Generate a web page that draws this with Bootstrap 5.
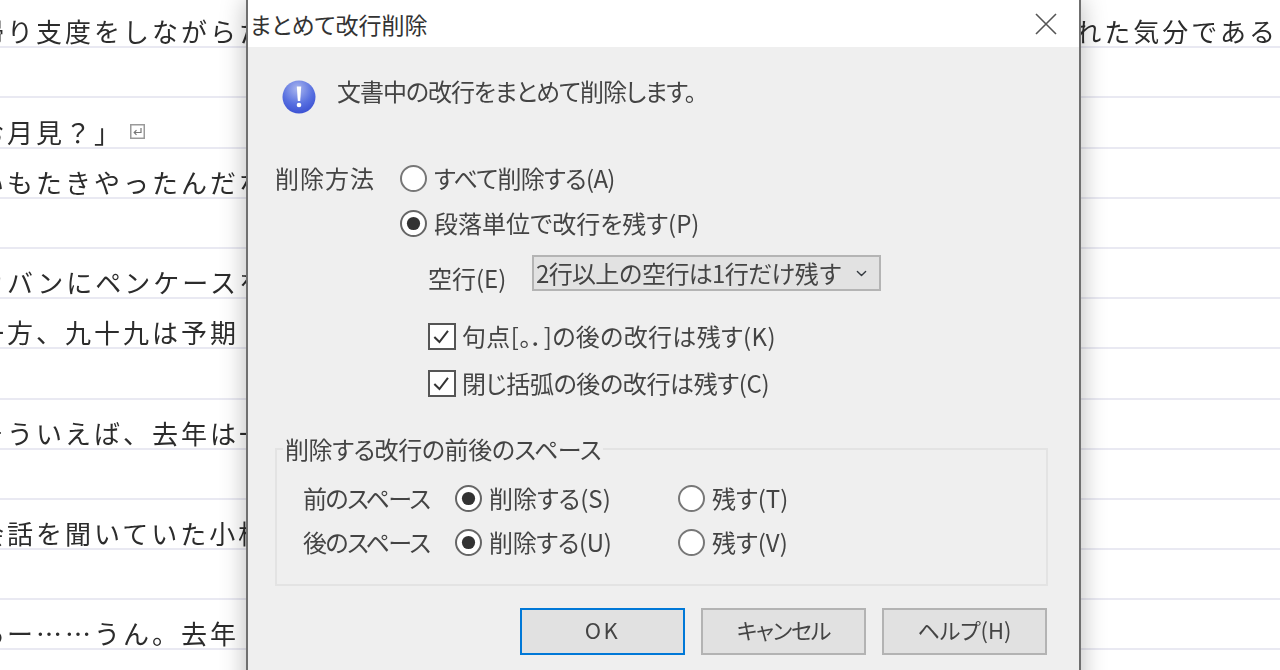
<!DOCTYPE html>
<html lang="ja">
<head>
<meta charset="utf-8">
<title>まとめて改行削除</title>
<link href="https://cdn.jsdelivr.net/npm/bootstrap@5.3.0/dist/css/bootstrap.min.css" rel="stylesheet">
<style>
html,body{height:670px;overflow:hidden;background:#fff}
body{font-family:"Noto Sans CJK JP",sans-serif;color:#3c3c3c}
.sheet{position:relative;width:1280px;height:670px;overflow:hidden;filter:blur(.35px)}
.doc{margin-top:-2px}
.doc-row{height:50.2px;border-bottom:2px solid #e9e9f2;font-family:"Noto Sans CJK JP",serif;font-size:26px;letter-spacing:3px;line-height:30px;color:#2c2c2c;white-space:nowrap;overflow:hidden;align-items:flex-end;padding-left:0}
.doc-left{margin-left:-22px}
.doc-right{margin-left:auto;margin-right:2px}
.ret-mark{width:15px;height:15px;margin-left:7px;margin-bottom:8px;flex:none}
.dlg{position:absolute;left:246px;top:0;width:835px;height:700px;background:#efefef;border-left:2px solid #6f6f6f;border-right:2px solid #6f6f6f;box-shadow:0 0 24px rgba(0,0,0,.28);font-size:24px;line-height:28px;font-feature-settings:"palt";color:#444}
.dlg-title{height:47px;background:#fff;padding-left:2px;align-items:center;justify-content:space-between;color:#333;font-size:23px}
.dlg-x{width:24px;height:24px;margin-right:21px}
.dlg-body{padding:33px 31px 0 27px}
.msg{margin-left:7px;gap:21px}
.msg-icon{width:34px;height:34px;flex:none}
.msg-text{margin-top:-3px;letter-spacing:-1.05px}
.way{margin-top:50px}
.way-label{width:125px;flex:none;letter-spacing:1px}
.opt-next{margin-top:17px;margin-left:125px}
.sp-a{letter-spacing:-.7px}
.sp-k{letter-spacing:.35px}
.sp-c{letter-spacing:-.35px}
.sp-u{letter-spacing:-.3px}
.dlg .form-check-input{margin:0;flex:none;float:none;width:27px;height:27px;background-color:#fff;border:2px solid #777;box-shadow:none}
.dlg .form-check-input[type=radio]:checked{background-color:#fff;border-color:#666;background-image:url("data:image/svg+xml,%3csvg xmlns='http://www.w3.org/2000/svg' viewBox='-4 -4 8 8'%3e%3ccircle r='2.3' fill='%23333'/%3e%3c/svg%3e")}
.dlg .form-check-input[type=checkbox]{border-radius:0;width:28px;height:27px;border-color:#555}
.dlg .form-check-input[type=checkbox]:checked{background-color:#fff;background-size:100% 100%;background-image:url("data:image/svg+xml,%3csvg xmlns='http://www.w3.org/2000/svg' viewBox='0 0 28 27'%3e%3cpath d='M5 14l6 6L21 7' fill='none' stroke='%23333' stroke-width='2.4'/%3e%3c/svg%3e")}
.opt{gap:7px}
.blank{margin-top:18px;margin-left:153px}
.blank-label{width:104px;flex:none;padding-top:9px}
.dlg .blank-select{width:349px;height:36px;padding:0 0 0 2px;border:2px solid #b4b4b4;border-radius:0;background-color:#e2e2e2;font-size:24px;letter-spacing:-.65px;line-height:30px;color:#444;box-shadow:none;background-position:right 10px center;background-size:15px 11px}
.chk{margin-left:153px;gap:6px}
.chk-a{margin-top:30px}
.chk-b{margin-top:19px}
.spaces{margin-top:45px;margin-bottom:0;border:2px solid #e3e3e3;padding:20px 0 0 26px;min-width:0;box-sizing:content-box;height:120px}
.spaces legend{float:none;width:auto;font-size:24px;letter-spacing:-.4px;line-height:14px;margin:0 0 0 -20px;padding:0 2px;height:14px;overflow:visible}
.sp-row{height:44px;align-items:center}
.sp-label{width:152px;flex:none;letter-spacing:-1.5px}
.sp-del{width:223px;flex:none}
.dlg-actions{margin-top:22px;gap:16px;justify-content:flex-end;margin-right:1px}
.dlg .act{width:165px;height:47px;padding:0 0 5px;background:#e1e1e1;border:2px solid #b3b3b3;border-radius:0;color:#444;font-size:22px;line-height:28px;font-feature-settings:"palt"}
.dlg .act-main{border-color:#0078d7}
.dlg .ok-txt{letter-spacing:2.5px}
.dlg .cancel-txt{letter-spacing:-1.2px}
</style>
</head>
<body>
<div class="sheet">
  <div class="doc">
    <div class="doc-row d-flex"><span class="doc-left">帰り支度をしながらた</span><span class="doc-right">れた気分である</span></div>
    <div class="doc-row d-flex"></div>
    <div class="doc-row d-flex"><span class="doc-left">お月見？」</span>
      <svg class="ret-mark" viewBox="0 0 15 15"><rect x=".75" y=".75" width="13.5" height="13.5" fill="#fff" stroke="#9a9a9a" stroke-width="1.5"/><path d="M11 4v4.5H4.5M6.5 6.2L4.2 8.5l2.3 2.3" fill="none" stroke="#777" stroke-width="1.2"/></svg>
    </div>
    <div class="doc-row d-flex"><span class="doc-left">いもたきやったんだな</span></div>
    <div class="doc-row d-flex"></div>
    <div class="doc-row d-flex"><span class="doc-left">カバンにペンケースを</span></div>
    <div class="doc-row d-flex"><span class="doc-left">一方、九十九は予期</span></div>
    <div class="doc-row d-flex"></div>
    <div class="doc-row d-flex"><span class="doc-left">そういえば、去年は一</span></div>
    <div class="doc-row d-flex"></div>
    <div class="doc-row d-flex"><span class="doc-left">会話を聞いていた小松</span></div>
    <div class="doc-row d-flex"></div>
    <div class="doc-row d-flex"><span class="doc-left">あー……うん。去年</span></div>
    <div class="doc-row d-flex"></div>
  </div>

  <div class="dlg" role="dialog">
    <div class="dlg-title d-flex">
      <span>まとめて改行削除</span>
      <svg class="dlg-x" viewBox="0 0 24 24"><path d="M2 2l20 20M22 2L2 22" stroke="#555" stroke-width="1.6" fill="none"/></svg>
    </div>
    <div class="dlg-body">
      <div class="msg d-flex">
        <svg class="msg-icon" viewBox="0 0 34 34">
          <defs><radialGradient id="ball" cx=".45" cy=".25" r=".85"><stop offset="0" stop-color="#a9b6ee"/><stop offset=".55" stop-color="#5870e0"/><stop offset="1" stop-color="#3348cf"/></radialGradient></defs>
          <circle cx="17" cy="17" r="16.5" fill="url(#ball)"/>
          <path d="M14.8 6.5h4.4l-1 14.5h-2.4z" fill="#fff"/><circle cx="17" cy="25" r="2.3" fill="#fff"/>
        </svg>
        <div class="msg-text">文書中の改行をまとめて削除します。</div>
      </div>

      <div class="way d-flex align-items-center">
        <span class="way-label">削除方法</span>
        <label class="opt sp-a d-flex align-items-center"><input class="form-check-input" type="radio" name="way">すべて削除する(A)</label>
      </div>
      <div class="opt-next d-flex align-items-center">
        <label class="opt d-flex align-items-center"><input class="form-check-input" type="radio" name="way" checked>段落単位で改行を残す(P)</label>
      </div>

      <div class="blank d-flex">
        <span class="blank-label">空行(E)</span>
        <select class="form-select blank-select"><option>2行以上の空行は1行だけ残す</option></select>
      </div>

      <label class="chk chk-a sp-k d-flex align-items-center"><input class="form-check-input" type="checkbox" checked>句点[。．]の後の改行は残す(K)</label>
      <label class="chk chk-b sp-c d-flex align-items-center"><input class="form-check-input" type="checkbox" checked>閉じ括弧の後の改行は残す(C)</label>

      <fieldset class="spaces">
        <legend>削除する改行の前後のスペース</legend>
        <div class="sp-row d-flex">
          <span class="sp-label">前のスペース</span>
          <label class="sp-del opt d-flex align-items-center"><input class="form-check-input" type="radio" name="pre" checked>削除する(S)</label>
          <label class="opt d-flex align-items-center"><input class="form-check-input" type="radio" name="pre">残す(T)</label>
        </div>
        <div class="sp-row d-flex">
          <span class="sp-label">後のスペース</span>
          <label class="sp-del opt sp-u d-flex align-items-center"><input class="form-check-input" type="radio" name="post" checked>削除する(U)</label>
          <label class="opt d-flex align-items-center"><input class="form-check-input" type="radio" name="post">残す(V)</label>
        </div>
      </fieldset>

      <div class="dlg-actions d-flex">
        <button type="button" class="btn act act-main"><span class="ok-txt">OK</span></button>
        <button type="button" class="btn act"><span class="cancel-txt">キャンセル</span></button>
        <button type="button" class="btn act">ヘルプ(H)</button>
      </div>
    </div>
  </div>
</div>
<script src="https://cdn.jsdelivr.net/npm/bootstrap@5.3.0/dist/js/bootstrap.bundle.min.js"></script>
</body>
</html>
